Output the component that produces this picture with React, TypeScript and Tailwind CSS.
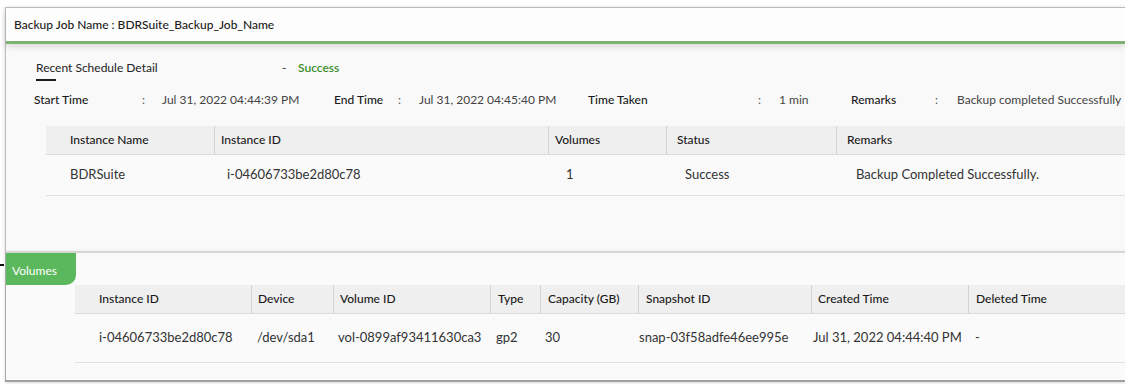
import React from "react";

const topCols = [
  { h: "Instance Name", v: "BDRSuite", hp: "pl-[24px]", vp: "pl-[24px]" },
  { h: "Instance ID", v: "i-04606733be2d80c78", hp: "pl-[6px]", vp: "pl-[13px]" },
  { h: "Volumes", v: "1", hp: "pl-[6px]", vp: "pl-[18px]" },
  { h: "Status", v: "Success", hp: "pl-[10px]", vp: "pl-[19px]" },
  { h: "Remarks", v: "Backup Completed Successfully.", hp: "pl-[10px]", vp: "pl-[20px]" },
];

const volCols = [
  { h: "Instance ID", v: "i-04606733be2d80c78", hp: "pl-[24px]", vp: "pl-[24px]" },
  { h: "Device", v: "/dev/sda1", hp: "pl-[6px]", vp: "pl-[6px]" },
  { h: "Volume ID", v: "vol-0899af93411630ca3", hp: "pl-[6px]", vp: "pl-[5px]" },
  { h: "Type", v: "gp2", hp: "pl-[7px]", vp: "pl-[6px]" },
  { h: "Capacity (GB)", v: "30", hp: "pl-[7px]", vp: "pl-[5px]" },
  { h: "Snapshot ID", v: "snap-03f58adfe46ee995e", hp: "pl-[7px]", vp: "pl-[1px]" },
  { h: "Created Time", v: "Jul 31, 2022 04:44:40 PM", hp: "pl-[6px]", vp: "pl-[2px]" },
  { h: "Deleted Time", v: "-", hp: "pl-[7px]", vp: "pl-[7px]" },
];

export default function App() {
  return (
    <div className="w-[1125px] h-[384px] overflow-hidden bg-white pt-[7px] font-['Lato','Noto_Sans',sans-serif] text-[12px]">
      {/* Top panel */}
      <div className="flex">
        <div className="w-[5px] shrink-0" />
        <div className="flex-1 h-[244px] border-t border-l border-[#bdbdbd] bg-[#f9f9f9] shadow-[0_1px_4px_rgba(0,0,0,0.18)] flex flex-col">
          <div className="h-[33px] bg-[#fdfdfd] flex items-center pl-[8px] text-[#1c1c1c] font-medium border-b-[3px] border-[#7db272] shadow-[0_3px_6px_rgba(0,0,0,0.12)] box-content">
            Backup Job Name : BDRSuite_Backup_Job_Name
          </div>
          <div className="pl-[30px] pt-[16px] flex flex-col">
            <div className="flex items-center h-[16px] leading-[16px]">
              <span className="w-[246px] text-[#222]">Recent Schedule Detail</span>
              <span className="w-[16px] text-[#333]">-</span>
              <span className="text-[#3b8e2c] font-semibold">Success</span>
            </div>
            <div className="mt-[3px] h-[2px] w-[20px] bg-[#1a1a1a]" />
          </div>
          <div className="pl-[28px] mt-[11px] flex items-center h-[16px] leading-[16px] whitespace-nowrap">
            <span className="w-[108px] font-medium text-[#1a1a1a]">Start Time</span>
            <span className="w-[20px] text-[#555]">:</span>
            <span className="w-[172px] text-[#444]">Jul 31, 2022 04:44:39 PM</span>
            <span className="w-[64px] font-medium text-[#1a1a1a]">End Time</span>
            <span className="w-[21px] text-[#555]">:</span>
            <span className="w-[169px] text-[#444]">Jul 31, 2022 04:45:40 PM</span>
            <span className="w-[170px] font-medium text-[#1a1a1a]">Time Taken</span>
            <span className="w-[21px] text-[#555]">:</span>
            <span className="w-[72px] text-[#444]">1 min</span>
            <span className="w-[84px] font-medium text-[#1a1a1a]">Remarks</span>
            <span className="w-[22px] text-[#555]">:</span>
            <span className="text-[#444]">Backup completed Successfully</span>
          </div>
          <div className="ml-[40px] mt-[18px] grid grid-cols-[168px_334px_118px_170px_1fr]">
            {topCols.map((c, i) => (
              <div
                key={"h" + i}
                className={`h-[29px] bg-[#efefef] border-b border-[#dcdcdc] flex items-center font-medium text-[#1a1a1a] ${c.hp} ${i > 0 ? "border-l border-l-[#d2d2d2]" : ""}`}
              >
                {c.h}
              </div>
            ))}
            {topCols.map((c, i) => (
              <div
                key={"v" + i}
                className={`h-[41px] bg-[#fafafa] border-b border-[#e0e0e0] flex items-center text-[13px] text-[#333] ${c.vp}`}
              >
                {c.v}
              </div>
            ))}
          </div>
        </div>
      </div>

      {/* Volumes panel */}
      <div className="flex">
        <div className="w-[5px] shrink-0">
          <div className="mt-[13px] h-[2px] w-[4px] bg-[#111]" />
        </div>
        <div className="flex-1 h-[131px] border-t-2 border-t-[#d6d6d6] border-l border-l-[#a9a9a9] border-b-2 border-b-[#a0a0a0] bg-[#fafafa] shadow-[0_1px_3px_rgba(0,0,0,0.15)] flex flex-col">
          <div className="w-[70px] h-[32px] bg-[#5cb85c] rounded-br-[10px] text-white flex items-center pl-[6px] pt-[3px]">
            Volumes
          </div>
          <div className="ml-[69px] grid grid-cols-[176px_82px_157px_50px_98px_173px_157px_1fr]">
            {volCols.map((c, i) => (
              <div
                key={"h" + i}
                className={`h-[29px] bg-[#efefef] border-b border-[#dcdcdc] flex items-center font-medium text-[#1a1a1a] whitespace-nowrap ${c.hp} ${i > 0 ? "border-l border-l-[#d2d2d2]" : ""}`}
              >
                {c.h}
              </div>
            ))}
            {volCols.map((c, i) => (
              <div
                key={"v" + i}
                className={`h-[49px] bg-[#fafafa] border-b border-[#e0e0e0] flex items-center text-[13px] text-[#333] whitespace-nowrap ${c.vp}`}
              >
                {c.v}
              </div>
            ))}
          </div>
        </div>
      </div>
    </div>
  );
}
